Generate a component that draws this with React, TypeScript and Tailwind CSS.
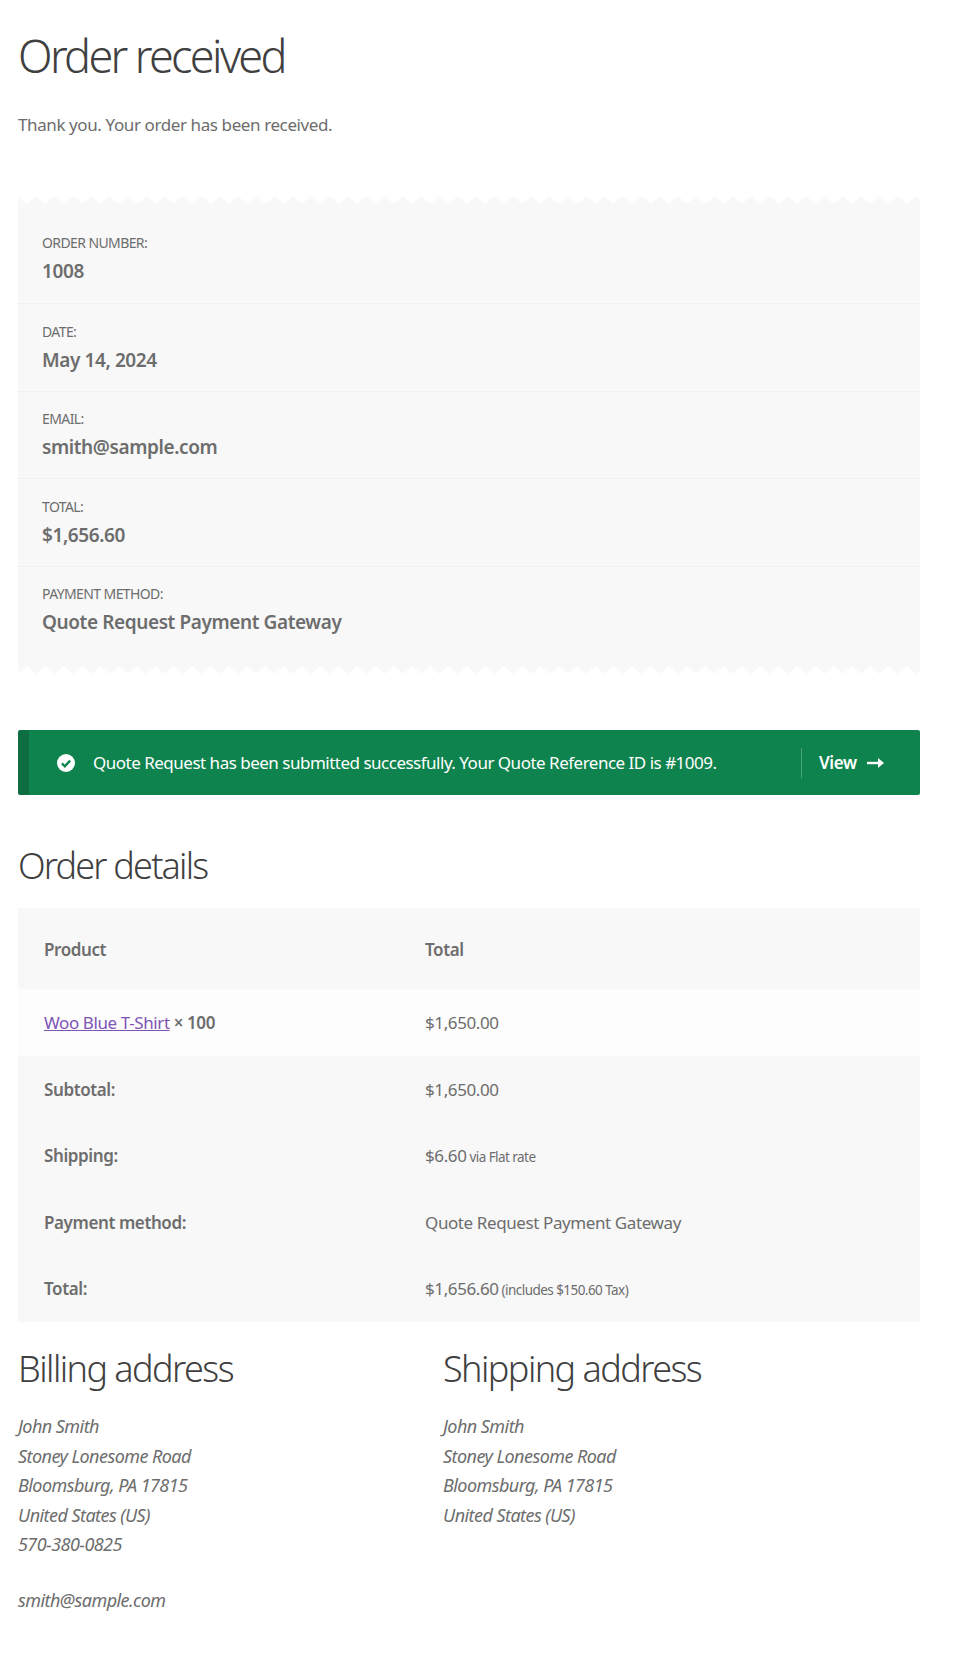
const zig = (flip: boolean) => (
  <svg className="block w-full h-[8px]" aria-hidden="true">
    <defs>
      <pattern id={flip ? "zb" : "zt"} x="0" y="0" width="18.33" height="8" patternUnits="userSpaceOnUse">
        <path d={flip ? "M0 0H18.33V8L9.17 0 0 8Z" : "M0 0 9.17 8 18.33 0V8H0Z"} fill="#f8f8f8" />
      </pattern>
    </defs>
    <rect width="100%" height="8" fill={`url(#${flip ? "zb" : "zt"})`} />
  </svg>
);

function Row({ label, value, first, last }: { label: string; value: string; first?: boolean; last?: boolean }) {
  return (
    <div className={`px-[24px] ${first ? "h-[100px] pt-[27px]" : "h-[87.6px] pt-[15.5px]"} ${last ? "" : "border-b border-dotted border-[#ececec]"}`}>
      <div className="text-[14px] leading-[24px] tracking-[-0.6px] text-[#6d6d6d] uppercase">{label}</div>
      <div className="text-[19px] leading-[32px] tracking-[-0.4px] font-semibold text-[#6d6d6d]">{value}</div>
    </div>
  );
}

function Tr({ a, b, small, bg }: { a: React.ReactNode; b: string; small?: string; bg?: string }) {
  return (
    <div className={`grid grid-cols-[381px_1fr] h-[66.6px] items-center px-[26px] pt-[1px] ${bg ?? "bg-[#f8f8f8]"}`}>
      <div className="font-semibold text-[#6d6d6d]">{a}</div>
      <div className="text-[#6d6d6d]">
        {b}
        {small && <span className="text-[13.5px] tracking-[-0.55px]"> {small}</span>}
      </div>
    </div>
  );
}

function Address({ title, lines, email }: { title: string; lines: string[]; email?: string }) {
  return (
    <div>
      <h2 className="text-[36px] leading-[48px] font-light text-[#404040] tracking-[-1.55px]">{title}</h2>
      <div className="mt-[19px] italic text-[#6d6d6d] text-[18px] leading-[29.6px] tracking-[-0.55px]">
        {lines.map((l) => (
          <div key={l}>{l}</div>
        ))}
        {email && <div className="mt-[26.5px]">{email}</div>}
      </div>
    </div>
  );
}

export default function App() {
  return (
    <div className="min-h-[1661px] bg-white px-[18px] pt-[26px] text-[17px] text-[#6d6d6d] font-['Noto_Sans','Open_Sans',sans-serif] tracking-[-0.4px]">
      <div className="w-[902px]">
        <h1 className="text-[45px] leading-[60px] font-light text-[#404040] tracking-[-2.65px]">Order received</h1>
        <p className="mt-[24px] leading-[29px]">Thank you. Your order has been received.</p>

        <div className="mt-[57px]">
          {zig(false)}
          <div className="bg-[#f8f8f8] h-[462px]">
            <Row first label="Order number:" value="1008" />
            <Row label="Date:" value="May 14, 2024" />
            <Row label="Email:" value="smith@sample.com" />
            <Row label="Total:" value="$1,656.60" />
            <Row label="Payment method:" value="Quote Request Payment Gateway" last />
          </div>
          {zig(true)}
        </div>

        <div className="mt-[56px] h-[65px] rounded-[2px] bg-[#0f834d] border-l-[11px] border-[#0d6f41] flex items-center pl-[28px] text-white">
          <svg viewBox="0 0 20 20" className="w-[18px] h-[18px] shrink-0">
            <circle cx="10" cy="10" r="10" fill="#fff" />
            <path d="M5.5 10.5 8.7 13.6 14.6 7.4" fill="none" stroke="#0f834d" strokeWidth="2.6" />
          </svg>
          <span className="ml-[18px] flex-1 tracking-[-0.5px] pt-[1px]">Quote Request has been submitted successfully. Your Quote Reference ID is #1009.</span>
          <div className="h-[30px] border-l border-white/25 flex items-center pl-[17px] w-[119px] font-semibold shrink-0 pt-[1px]">
            View
            <svg viewBox="0 0 17 12" className="w-[17px] h-[12px] ml-[10px]">
              <path d="M0 6H13" stroke="#fff" strokeWidth="2.4" />
              <path d="M11 1 17 6 11 11Z" fill="#fff" />
            </svg>
          </div>
        </div>

        <h2 className="mt-[47px] text-[36px] leading-[48px] font-light text-[#404040] tracking-[-1.8px]">Order details</h2>

        <div className="mt-[18px]">
          <div className="grid grid-cols-[381px_1fr] h-[81px] items-center px-[26px] pt-[2px] bg-[#f8f8f8] font-semibold">
            <div>Product</div>
            <div>Total</div>
          </div>
          <Tr
            bg="bg-[#fdfdfd]"
            a={
              <span className="font-normal">
                <span className="text-[#7f54b3] underline">Woo Blue T-Shirt</span> <b className="font-semibold">× 100</b>
              </span>
            }
            b="$1,650.00"
          />
          <Tr a="Subtotal:" b="$1,650.00" />
          <Tr a="Shipping:" b="$6.60" small="via Flat rate" />
          <Tr a="Payment method:" b="Quote Request Payment Gateway" />
          <Tr a="Total:" b="$1,656.60" small="(includes $150.60 Tax)" />
        </div>

        <div className="grid grid-cols-[425px_1fr] mt-[23px]">
          <Address title="Billing address" lines={["John Smith", "Stoney Lonesome Road", "Bloomsburg, PA 17815", "United States (US)", "570-380-0825"]} email="smith@sample.com" />
          <Address title="Shipping address" lines={["John Smith", "Stoney Lonesome Road", "Bloomsburg, PA 17815", "United States (US)"]} />
        </div>
      </div>
    </div>
  );
}
